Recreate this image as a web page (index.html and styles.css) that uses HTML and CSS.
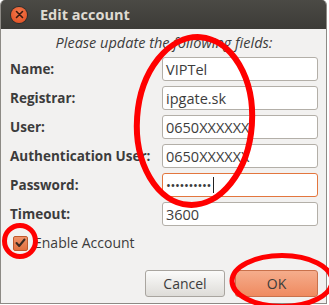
FILE: index.html
```html
<!DOCTYPE html>
<html>
<head>
<meta charset="utf-8">
<link rel="stylesheet" href="styles.css">
</head>
<body>
<div class="window">
  <div class="titlebar">
    <span class="close"><svg width="9" height="9" viewBox="0 0 9 9"><path d="M1.5 1.5 L7.5 7.5 M7.5 1.5 L1.5 7.5" stroke="#3a1a10" stroke-width="1.6" stroke-linecap="round"/></svg></span>
    <span class="title">Edit account</span>
  </div>
  <div class="content">
    <div class="heading">Please update the following fields:</div>
    <div class="form">
      <label class="label">Name:</label>
      <div class="entry">VIPTel</div>
      <label class="label">Registrar:</label>
      <div class="entry">ipgate.sk</div>
      <label class="label">User:</label>
      <div class="entry">0650XXXXXX</div>
      <label class="label">Authentication User:</label>
      <div class="entry">0650XXXXXX</div>
      <label class="label">Password:</label>
      <div class="entry focused"><span class="dots">••••••••••</span><span class="cursor"></span></div>
      <label class="label">Timeout:</label>
      <div class="entry">3600</div>
    </div>
    <div class="check-row">
      <span class="checkbox"><svg width="11" height="10" viewBox="0 0 11 10"><path d="M1.5 5 L4.2 8 L9.5 1.5" fill="none" stroke="#3b2a22" stroke-width="2" stroke-linecap="round" stroke-linejoin="round"/></svg></span>
      <span class="check-label">Enable Account</span>
    </div>
    <div class="buttons">
      <div class="btn cancel">Cancel</div>
      <div class="btn ok">OK</div>
    </div>
  </div>
</div>
<svg class="marks" width="329" height="305" viewBox="0 0 329 305">
  <ellipse cx="194.5" cy="121" rx="57.5" ry="84" transform="rotate(4 194.5 121)" fill="none" stroke="#f00" stroke-width="6"/>
  <circle cx="20" cy="241" r="15.5" fill="none" stroke="#f00" stroke-width="5"/>
  <ellipse cx="282" cy="281" rx="50" ry="25.5" fill="none" stroke="#f00" stroke-width="5"/>
</svg>
</body>
</html>
```
FILE: styles.css
```css
html, body {
  margin: 0;
  padding: 0;
  background: #ffffff;
}
body {
  width: 329px;
  height: 305px;
  overflow: hidden;
  position: relative;
  font-family: "Open Sans", "DejaVu Sans", sans-serif;
  color: #3c3c3c;
}
.window {
  width: 327px;
  height: 304px;
  box-sizing: border-box;
  background: #f2f1f0;
  border-left: 1px solid #8d8a85;
  border-right: 1px solid #8d8a85;
  border-bottom: 1px solid #8d8a85;
  border-radius: 5px 5px 0 0;
  overflow: hidden;
  display: flex;
  flex-direction: column;
}
.titlebar {
  height: 29px;
  flex: none;
  background: linear-gradient(#4b4a45, #3c3b37);
  display: flex;
  align-items: center;
  padding-left: 10px;
  gap: 13px;
}
.close {
  width: 16px;
  height: 16px;
  border-radius: 50%;
  background: radial-gradient(circle at 50% 35%, #f47a4d, #df4a1d);
  box-shadow: 0 0 0 1px #2e2d2a;
  display: flex;
  align-items: center;
  justify-content: center;
}
.title {
  color: #dfdbd2;
  font-weight: bold;
  font-size: 14.5px;
  line-height: 18px;
}
.content {
  flex: 1;
  display: flex;
  flex-direction: column;
  padding: 5px 8px 0 9px;
}
.heading {
  font-style: italic;
  font-size: 14.5px;
  line-height: 18px;
  text-align: center;
  margin-bottom: 5px;
}
.form {
  display: grid;
  grid-template-columns: 152px 1fr;
  row-gap: 5px;
}
.label {
  font-weight: bold;
  font-size: 13.5px;
  display: flex;
  align-items: center;
  white-space: nowrap;
}
.entry {
  height: 24px;
  box-sizing: border-box;
  background: #fff;
  border: 1px solid #b3afa8;
  border-radius: 3px;
  font-size: 14.5px;
  display: flex;
  align-items: center;
  padding-left: 3px;
  color: #3c3c3c;
}
.entry.focused {
  border-color: #e3763e;
}
.dots {
  font-size: 13px;
  letter-spacing: -0.4px;
}
.cursor {
  width: 1px;
  height: 16px;
  background: #222;
  margin-left: 2px;
}
.check-row {
  display: flex;
  align-items: center;
  margin-top: 9px;
  gap: 6px;
  padding-left: 3px;
}
.checkbox {
  width: 15px;
  height: 15px;
  box-sizing: border-box;
  border: 1px solid #c0582c;
  border-radius: 2px;
  background: linear-gradient(#f0936a, #e1703f);
  display: flex;
  align-items: center;
  justify-content: center;
}
.check-label {
  font-size: 14px;
  line-height: 16px;
}
.buttons {
  display: flex;
  justify-content: flex-end;
  gap: 10px;
  margin-top: 19px;
}
.btn {
  width: 80px;
  height: 27px;
  box-sizing: border-box;
  border-radius: 3px;
  display: flex;
  align-items: center;
  justify-content: center;
  font-size: 14px;
}
.cancel {
  border: 1px solid #a9a59f;
  background: linear-gradient(#fbfbfa, #dedcd8);
}
.ok {
  width: 83px;
  border: 1px solid #c9714b;
  background: linear-gradient(#f5ad8c, #ef8a60);
}
.marks {
  position: absolute;
  left: 0;
  top: 0;
  pointer-events: none;
}
```
